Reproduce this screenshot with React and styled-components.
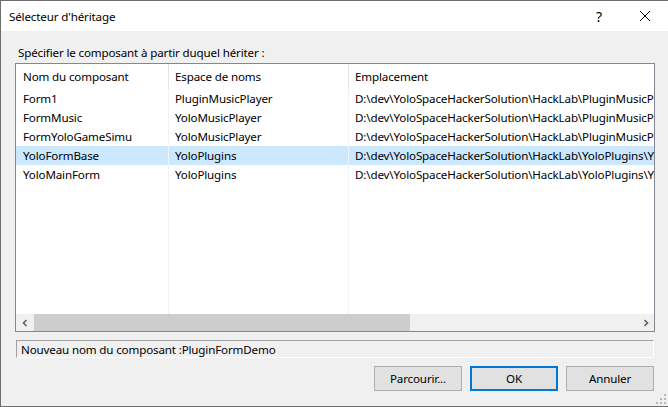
import styled, { createGlobalStyle } from "styled-components";

const GlobalStyle = createGlobalStyle`
  html, body {
    margin: 0;
    padding: 0;
    background: #ffffff;
  }
  body {
    font-family: "Noto Sans", "Open Sans", sans-serif;
    font-size: 11.6px;
    letter-spacing: -0.15px;
    color: #000000;
  }
`;

const ROWS = [
  { name: "Form1", ns: "PluginMusicPlayer", path: "D:\\dev\\YoloSpaceHackerSolution\\HackLab\\PluginMusicPlayer\\Form1.cs" },
  { name: "FormMusic", ns: "YoloMusicPlayer", path: "D:\\dev\\YoloSpaceHackerSolution\\HackLab\\PluginMusicPlayer\\FormMusic.cs" },
  { name: "FormYoloGameSimu", ns: "YoloMusicPlayer", path: "D:\\dev\\YoloSpaceHackerSolution\\HackLab\\PluginMusicPlayer\\FormYoloGameSimu.cs" },
  { name: "YoloFormBase", ns: "YoloPlugins", path: "D:\\dev\\YoloSpaceHackerSolution\\HackLab\\YoloPlugins\\YoloFormBase.cs", selected: true },
  { name: "YoloMainForm", ns: "YoloPlugins", path: "D:\\dev\\YoloSpaceHackerSolution\\HackLab\\YoloPlugins\\YoloMainForm.cs" },
];

const Window = styled.div`
  width: 667px;
  height: 405px;
  border-left: 1px solid #6e6e6e;
  border-top: 1px solid #6e6e6e;
  border-bottom: 1px solid #6e6e6e;
  display: flex;
  flex-direction: column;
  position: relative;
`;

const TitleBar = styled.div`
  height: 30px;
  background: #ffffff;
  display: flex;
  align-items: center;
  padding-left: 8px;
`;

const Title = styled.span`
  flex: 1;
`;

const CaptionButton = styled.div`
  width: 46px;
  height: 30px;
  display: flex;
  align-items: center;
  justify-content: center;
  font-size: 14px;
`;

const Body = styled.div`
  flex: 1;
  background: #f0f0f0;
  padding: 14px 13px 0 14px;
  display: flex;
  flex-direction: column;
`;

const Label = styled.div`
  height: 16px;
  line-height: 16px;
  padding-left: 3px;
  margin-bottom: 2px;
`;

const List = styled.div`
  height: 267px;
  border: 1px solid #828790;
  background: #ffffff;
  display: flex;
  flex-direction: column;
  overflow: hidden;
`;

const Grid = styled.div`
  flex: 1;
  display: grid;
  grid-template-columns: 153px 180px 1fr;
  grid-template-rows: 25px repeat(5, 19px) 1fr;
`;

const Cell = styled.div`
  display: flex;
  align-items: center;
  padding-left: ${(p) => p.$pad}px;
  white-space: nowrap;
  overflow: hidden;
  border-right: ${(p) => (p.$last ? "none" : `1px solid ${p.$header ? "#e5e5e5" : "#f0f3f7"}`)};
  background: ${(p) => (p.$selected ? "#cce8ff" : "#ffffff")};
`;

const FillCell = styled.div`
  border-right: ${(p) => (p.$last ? "none" : "1px solid #f0f3f7")};
`;

const ScrollBar = styled.div`
  height: 17px;
  background: #f0f0f0;
  display: flex;
  align-items: stretch;
`;

const Arrow = styled.div`
  width: 17px;
  display: flex;
  align-items: center;
  justify-content: center;
`;

const Track = styled.div`
  flex: 1;
  display: flex;
`;

const Thumb = styled.div`
  width: 376px;
  margin-left: 1px;
  background: #cdcdcd;
`;

const NameField = styled.div`
  margin-top: 8px;
  height: 16px;
  margin-left: 1px;
  margin-right: 1px;
  border-top: 1px solid #a0a0a0;
  border-left: 1px solid #a0a0a0;
  border-bottom: 1px solid #ffffff;
  border-right: 1px solid #ffffff;
  display: flex;
  align-items: center;
  padding-left: 4px;
`;

const Buttons = styled.div`
  margin-top: 8px;
  display: flex;
  justify-content: flex-end;
  gap: 8px;
  padding-right: 1px;
`;

const Button = styled.div`
  width: ${(p) => (p.$default ? 84 : 86)}px;
  height: ${(p) => (p.$default ? 21 : 23)}px;
  background: #e1e1e1;
  border: ${(p) => (p.$default ? "2px solid #0078d7" : "1px solid #adadad")};
  display: flex;
  align-items: center;
  justify-content: center;
`;

const Grip = styled.svg`
  position: absolute;
  right: 2px;
  bottom: 2px;
`;

function ChevronLeft() {
  return (
    <svg width="8" height="8" viewBox="0 0 8 8">
      <path d="M5.5 1 L2.5 4 L5.5 7" fill="none" stroke="#606060" strokeWidth="1.6" />
    </svg>
  );
}

function ChevronRight() {
  return (
    <svg width="8" height="8" viewBox="0 0 8 8">
      <path d="M2.5 1 L5.5 4 L2.5 7" fill="none" stroke="#606060" strokeWidth="1.6" />
    </svg>
  );
}

function CloseIcon() {
  return (
    <svg width="10" height="10" viewBox="0 0 10 10">
      <path d="M0 0 L10 10 M10 0 L0 10" stroke="#000" strokeWidth="1" />
    </svg>
  );
}

export default function App() {
  return (
    <>
      <GlobalStyle />
      <Window>
        <TitleBar>
          <Title>Sélecteur d'héritage</Title>
          <CaptionButton>?</CaptionButton>
          <CaptionButton>
            <CloseIcon />
          </CaptionButton>
        </TitleBar>
        <Body>
          <Label>Spécifier le composant à partir duquel hériter :</Label>
          <List>
            <Grid>
              <Cell $header $pad={7}>Nom du composant</Cell>
              <Cell $header $pad={6}>Espace de noms</Cell>
              <Cell $header $last $pad={6}>Emplacement</Cell>
              {ROWS.map((r) => [
                <Cell key={r.name + "a"} $pad={7} $selected={r.selected}>{r.name}</Cell>,
                <Cell key={r.name + "b"} $pad={6} $selected={r.selected}>{r.ns}</Cell>,
                <Cell key={r.name + "c"} $pad={6} $last $selected={r.selected}>{r.path}</Cell>,
              ])}
              <FillCell />
              <FillCell />
              <FillCell $last />
            </Grid>
            <ScrollBar>
              <Arrow>
                <ChevronLeft />
              </Arrow>
              <Track>
                <Thumb />
              </Track>
              <Arrow>
                <ChevronRight />
              </Arrow>
            </ScrollBar>
          </List>
          <NameField>Nouveau nom du composant :PluginFormDemo</NameField>
          <Buttons>
            <Button>Parcourir...</Button>
            <Button $default>OK</Button>
            <Button>Annuler</Button>
          </Buttons>
        </Body>
        <Grip width="10" height="10" viewBox="0 0 10 10">
          {[[8, 0], [8, 4], [4, 4], [8, 8], [4, 8], [0, 8]].map(([x, y]) => (
            <rect key={`${x}-${y}`} x={x} y={y} width="2" height="2" fill="#b8b8b8" />
          ))}
        </Grip>
      </Window>
    </>
  );
}
